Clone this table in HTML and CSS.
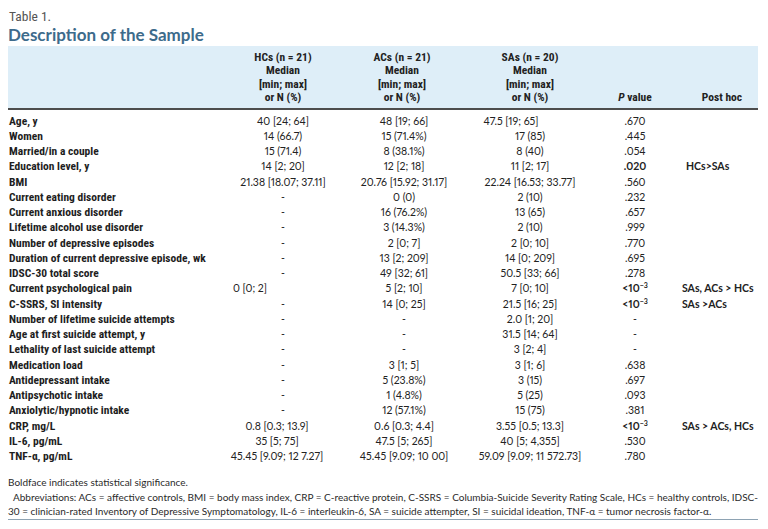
FILE: index.html
```html
<!DOCTYPE html>
<html lang="en">
<head>
<meta charset="utf-8">
<title>Table 1. Description of the Sample</title>
<link rel="stylesheet" href="styles.css">
</head>
<body>
<div class="page">
  <div class="kicker">Table 1.</div>
  <h1 class="title">Description of the Sample</h1>
  <table class="tbl">
    <colgroup>
      <col class="c-label"><col class="c-hc"><col class="c-ac"><col class="c-sa"><col class="c-p"><col class="c-post">
    </colgroup>
    <thead>
      <tr>
        <th class="h-label"></th>
        <th class="h-grp">HCs (n = 21)<br>Median<br>[min; max]<br>or N (%)</th>
        <th class="h-grp">ACs (n = 21)<br>Median<br>[min; max]<br>or N (%)</th>
        <th class="h-grp">SAs (n = 20)<br>Median<br>[min; max]<br>or N (%)</th>
        <th class="h-p"><i>P</i> value</th>
        <th class="h-post">Post hoc</th>
      </tr>
    </thead>
    <tbody>
      <tr class="first"><th>Age, y</th><td>40 [24; 64]</td><td>48 [19; 66]</td><td class="sh-l">47.5 [19; 65]</td><td class="p">.670</td><td class="post"></td></tr>
      <tr><th>Women</th><td>14 (66.7)</td><td>15 (71.4%)</td><td>17 (85)</td><td class="p">.445</td><td class="post"></td></tr>
      <tr><th>Married/in a couple</th><td>15 (71.4)</td><td>8 (38.1%)</td><td>8 (40)</td><td class="p">.054</td><td class="post"></td></tr>
      <tr><th>Education level, y</th><td>14 [2; 20]</td><td>12 [2; 18]</td><td>11 [2; 17]</td><td class="p sig">.020</td><td class="post post-c">HCs&gt;SAs</td></tr>
      <tr><th>BMI</th><td>21.38 [18.07; 37.11]</td><td>20.76 [15.92; 31.17]</td><td>22.24 [16.53; 33.77]</td><td class="p">.560</td><td class="post"></td></tr>
      <tr><th>Current eating disorder</th><td>-</td><td>0 (0)</td><td>2 (10)</td><td class="p">.232</td><td class="post"></td></tr>
      <tr><th>Current anxious disorder</th><td>-</td><td>16 (76.2%)</td><td>13 (65)</td><td class="p">.657</td><td class="post"></td></tr>
      <tr><th>Lifetime alcohol use disorder</th><td>-</td><td>3 (14.3%)</td><td>2 (10)</td><td class="p">.999</td><td class="post"></td></tr>
      <tr><th>Number of depressive episodes</th><td>-</td><td>2 [0; 7]</td><td>2 [0; 10]</td><td class="p">.770</td><td class="post"></td></tr>
      <tr><th>Duration of current depressive episode, wk</th><td>-</td><td>13 [2; 209]</td><td>14 [0; 209]</td><td class="p">.695</td><td class="post"></td></tr>
      <tr><th>IDSC-30 total score</th><td>-</td><td>49 [32; 61]</td><td>50.5 [33; 66]</td><td class="p">.278</td><td class="post"></td></tr>
      <tr><th>Current psychological pain</th><td class="sh-l2">0 [0; 2]</td><td>5 [2; 10]</td><td>7 [0; 10]</td><td class="p sig">&lt;10<sup>−3</sup></td><td class="post">SAs, ACs &gt; HCs</td></tr>
      <tr><th>C-SSRS, SI intensity</th><td>-</td><td>14 [0; 25]</td><td>21.5 [16; 25]</td><td class="p sig">&lt;10<sup>−3</sup></td><td class="post">SAs &gt;ACs</td></tr>
      <tr><th>Number of lifetime suicide attempts</th><td>-</td><td>-</td><td>2.0 [1; 20]</td><td class="p">-</td><td class="post"></td></tr>
      <tr><th>Age at first suicide attempt, y</th><td>-</td><td>-</td><td>31.5 [14; 64]</td><td class="p">-</td><td class="post"></td></tr>
      <tr><th>Lethality of last suicide attempt</th><td>-</td><td>-</td><td>3 [2; 4]</td><td class="p">-</td><td class="post"></td></tr>
      <tr><th>Medication load</th><td>-</td><td>3 [1; 5]</td><td>3 [1; 6]</td><td class="p">.638</td><td class="post"></td></tr>
      <tr><th>Antidepressant intake</th><td>-</td><td>5 (23.8%)</td><td>3 (15)</td><td class="p">.697</td><td class="post"></td></tr>
      <tr><th>Antipsychotic intake</th><td>-</td><td>1 (4.8%)</td><td>5 (25)</td><td class="p">.093</td><td class="post"></td></tr>
      <tr><th>Anxiolytic/hypnotic intake</th><td>-</td><td>12 (57.1%)</td><td>15 (75)</td><td class="p">.381</td><td class="post"></td></tr>
      <tr><th>CRP, mg/L</th><td class="sh-l1">0.8 [0.3; 13.9]</td><td>0.6 [0.3; 4.4]</td><td>3.55 [0.5; 13.3]</td><td class="p sig">&lt;10<sup>−3</sup></td><td class="post">SAs &gt; ACs, HCs</td></tr>
      <tr><th>IL-6, pg/mL</th><td class="sh-l1">35 [5; 75]</td><td>47.5 [5; 265]</td><td>40 [5; 4,355]</td><td class="p">.530</td><td class="post"></td></tr>
      <tr><th>TNF-α, pg/mL</th><td class="sh-l1">45.45 [9.09; 12 7.27]</td><td>45.45 [9.09; 10 00]</td><td>59.09 [9.09; 11 572.73]</td><td class="p">.780</td><td class="post"></td></tr>
    </tbody>
  </table>
  <div class="notes">
    <p class="note first-note">Boldface indicates statistical significance.</p>
    <p class="note abbr-1">Abbreviations: ACs = affective controls, BMI = body mass index, CRP = C-reactive protein, C-SSRS = Columbia-Suicide Severity Rating Scale, HCs = healthy controls, IDSC-</p>
    <p class="note abbr-2">30 = clinician-rated Inventory of Depressive Symptomatology, IL-6 = interleukin-6, SA = suicide attempter, SI = suicidal ideation, TNF-α = tumor necrosis factor-α.</p>
  </div>
</div>
</body>
</html>
```
FILE: styles.css
```css
html, body {
  margin: 0;
  padding: 0;
  background: #ffffff;
}

.page {
  width: 750px;
  margin-left: 8px;
  padding-top: 7px;
  color: #222222;
}

.kicker {
  font-family: "Roboto Condensed", "DejaVu Sans Condensed", sans-serif;
  font-size: 13.5px;
  line-height: 18px;
  color: #555555;
  margin-left: 1px;
}

.title {
  margin: 0 0 2px 0;
  font-family: Lato, "Noto Sans", sans-serif;
  font-weight: 700;
  font-size: 17px;
  line-height: 19px;
  color: #3d6b8b;
}

.tbl {
  width: 750px;
  border-collapse: collapse;
  table-layout: fixed;
}

.c-label { width: 220px; }
.c-hc { width: 110px; }
.c-ac { width: 132px; }
.c-sa { width: 120px; }
.c-p { width: 90px; }
.c-post { width: 78px; }

.tbl thead tr {
  background: #deeef8;
  border-bottom: 2px solid #4d4d4d;
}

.tbl thead th {
  font-family: "Roboto Condensed", "DejaVu Sans Condensed", sans-serif;
  font-weight: 700;
  font-size: 11.5px;
  line-height: 13.25px;
  color: #222222;
  text-align: center;
  vertical-align: bottom;
  padding: 5px 0 4px 0;
}

.tbl thead th.h-grp:nth-child(3) {
  padding-right: 4px;
}

.tbl thead th.h-p i {
  font-style: italic;
}

.tbl thead th.h-post {
  padding-left: 6px;
}

.tbl tbody tr.first th,
.tbl tbody tr.first td {
  padding-top: 3.5px;
}

.tbl tbody th {
  font-family: "Roboto Condensed", "DejaVu Sans Condensed", sans-serif;
  font-weight: 700;
  font-size: 11.5px;
  line-height: 15.25px;
  text-align: left;
  padding: 0 0 0 1px;
  white-space: nowrap;
  color: #1e1e1e;
}

.tbl tbody td {
  font-family: Lato, "Noto Sans", sans-serif;
  font-size: 10.5px;
  font-variant-numeric: proportional-nums;
  line-height: 15.25px;
  text-align: center;
  padding: 0;
  white-space: nowrap;
  color: #222222;
}

.tbl tbody td.sh-l {
  padding-right: 38px;
}

.tbl tbody td.sh-l1 {
  padding-right: 12px;
}

.tbl tbody td.sh-l2 {
  padding-right: 66px;
}

.tbl tbody td.p.sig {
  font-weight: 700;
}

.tbl tbody td.p sup {
  font-size: 7px;
  line-height: 0;
  vertical-align: 4px;
}

.tbl tbody td.post {
  text-align: left;
  padding-left: 2px;
  font-weight: 700;
}

.tbl tbody td.post-c {
  padding-left: 6px;
}

.notes {
  margin-top: 10.5px;
  border-bottom: 1.5px solid #8ea3b3;
  padding-bottom: 0.5px;
}

.note {
  margin: 0;
  font-family: Lato, "Noto Sans", sans-serif;
  font-size: 10px;
  line-height: 14.5px;
  color: #2a2a2a;
  white-space: nowrap;
}

.first-note {
  margin-bottom: 0.5px;
}

.abbr-1 {
  padding-left: 5px;
  text-align: justify;
  text-align-last: justify;
  white-space: normal;
}
```
